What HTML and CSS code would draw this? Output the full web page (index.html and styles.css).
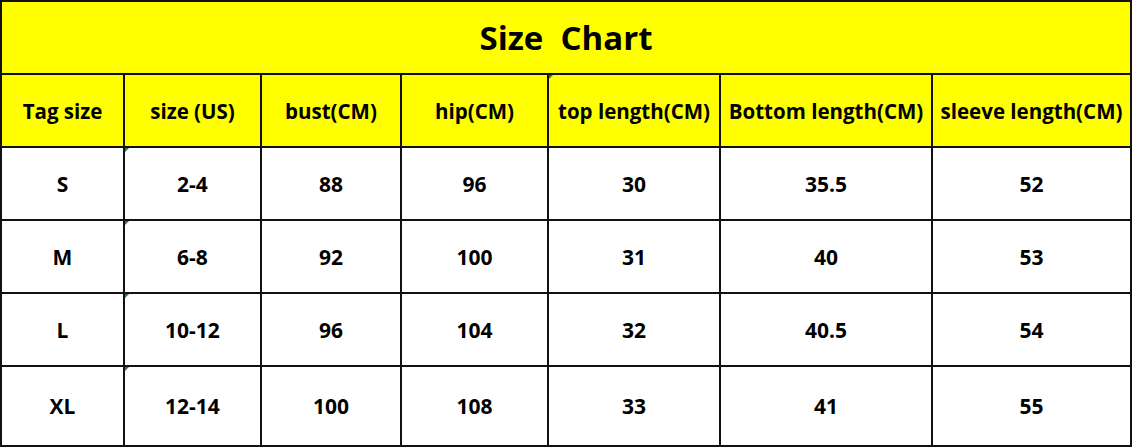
FILE: index.html
```html
<!DOCTYPE html>
<html>
<head>
<meta charset="utf-8">
<link rel="stylesheet" href="styles.css">
</head>
<body>
<div class="chart">
  <div class="cell title">Size&nbsp;&nbsp;Chart</div>
  <div class="cell head">Tag size</div>
  <div class="cell head">size (US)</div>
  <div class="cell head">bust(CM)</div>
  <div class="cell head">hip(CM)</div>
  <div class="cell head flag">top length(CM)</div>
  <div class="cell head">Bottom length(CM)</div>
  <div class="cell head">sleeve length(CM)</div>

  <div class="cell">S</div>
  <div class="cell flag">2-4</div>
  <div class="cell">88</div>
  <div class="cell">96</div>
  <div class="cell">30</div>
  <div class="cell">35.5</div>
  <div class="cell">52</div>

  <div class="cell">M</div>
  <div class="cell flag">6-8</div>
  <div class="cell">92</div>
  <div class="cell">100</div>
  <div class="cell">31</div>
  <div class="cell">40</div>
  <div class="cell">53</div>

  <div class="cell">L</div>
  <div class="cell flag">10-12</div>
  <div class="cell">96</div>
  <div class="cell">104</div>
  <div class="cell">32</div>
  <div class="cell">40.5</div>
  <div class="cell">54</div>

  <div class="cell">XL</div>
  <div class="cell flag">12-14</div>
  <div class="cell">100</div>
  <div class="cell">108</div>
  <div class="cell">33</div>
  <div class="cell">41</div>
  <div class="cell">55</div>
</div>
</body>
</html>
```
FILE: styles.css
```css
html, body {
  margin: 0;
  padding: 0;
  background: #ffffff;
}
body {
  width: 1134px;
  height: 448px;
  overflow: hidden;
}
.chart {
  display: grid;
  grid-template-columns: 121px 135px 138px 145px 170px 210px 197px;
  grid-template-rows: 71px 71px 71px 71px 71px 78px;
  gap: 2px;
  padding: 2px;
  background: #111111;
  width: max-content;
  font-family: "Open Sans", "Liberation Sans", sans-serif;
  font-weight: 700;
  color: #000000;
}
.cell {
  position: relative;
  background: #ffffff;
  display: flex;
  align-items: center;
  justify-content: center;
  font-size: 21px;
  white-space: nowrap;
  overflow: hidden;
}
.title {
  grid-column: 1 / -1;
  background: #ffff00;
  font-size: 33px;
}
.head {
  background: #ffff00;
  font-size: 20.5px;
}
.flag::before {
  content: "";
  position: absolute;
  left: 0;
  top: 0;
  width: 0;
  height: 0;
  border-top: 4px solid #2e7d32;
  border-right: 4px solid transparent;
}
```
